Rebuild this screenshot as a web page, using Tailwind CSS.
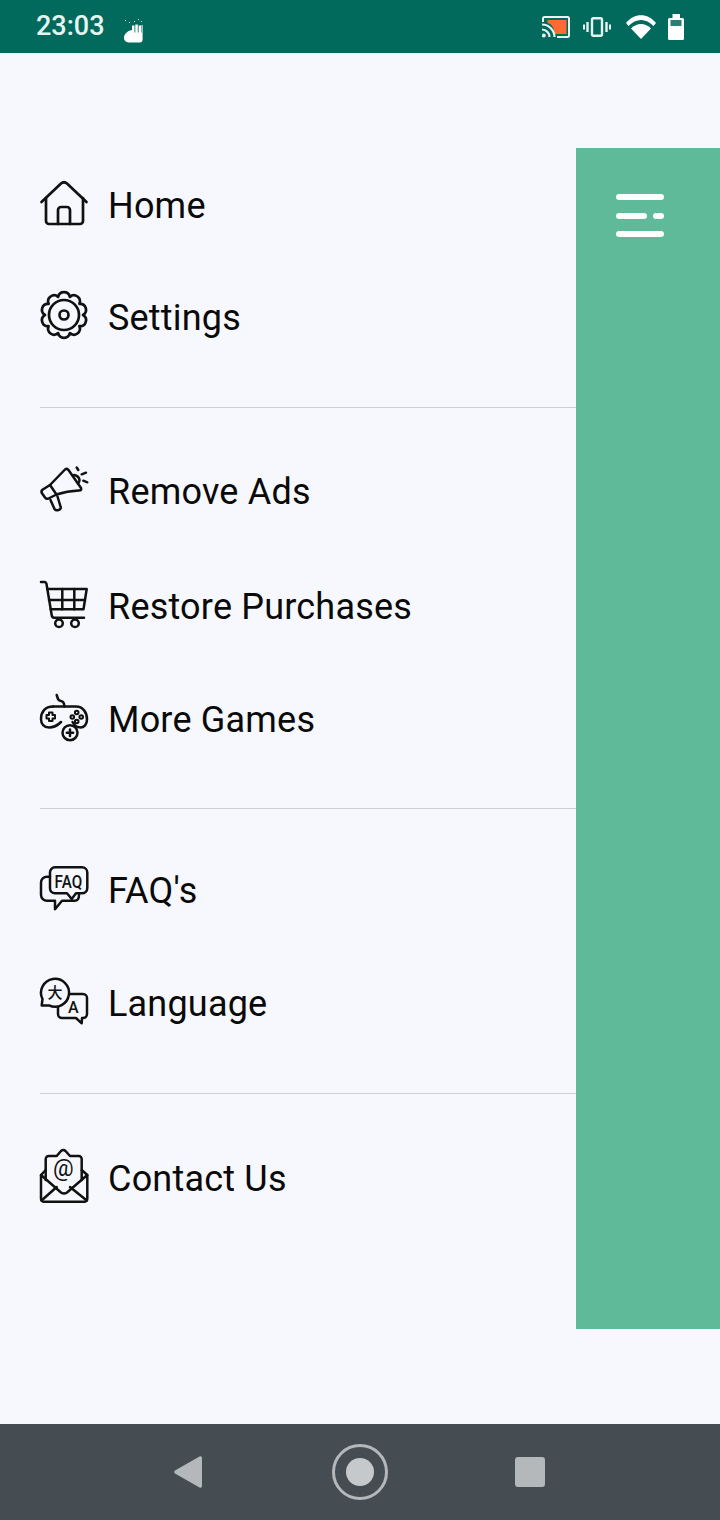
<!DOCTYPE html>
<html lang="en">
<head>
    <meta charset="UTF-8">
    <meta name="viewport" content="width=device-width, initial-scale=1.0">
    <title>Menu</title>
    <script src="https://cdn.jsdelivr.net/npm/@tailwindcss/browser@4"></script>
</head>
<body class="bg-[#f6f8fd] font-['Roboto',sans-serif]">
<div class="w-[720px] h-[1520px] flex flex-col overflow-hidden">

    <!-- status bar -->
    <div class="h-[53px] bg-[#016a5c] flex items-center justify-between pl-[36px] pr-[36px] shrink-0">
        <div class="flex items-center">
            <span class="text-[27px] font-medium text-[#e6f5f2] leading-none w-[88px]">23:03</span>
            <svg class="w-[20px] h-[24px] mt-[8px]" viewBox="0 0 20 24" fill="#fff">
                <path d="M8 6.500h2.500v7h.8v-8h2.500v8h.8v-7h2.500v7h.5V6h1v14.500a3 3 0 0 1-3 3H6c-4 0-6-2-6-4.500C0 15 3 12 8 11z"/>
                <path d="M1 1h1v1H1zM5 3h1v1H5zM14 0h1v1h-1zM17 2h1v1h-1zM10 2h1v1h-1z" opacity=".8"/>
            </svg>
        </div>
        <div class="flex items-center">
            <svg class="w-[28px] h-[22px]" viewBox="0 0 28 22" fill="none" stroke="#e6f5f2">
                <path d="M5.500 4H24.500V18H13C12 12 10 8 5.500 7z" fill="#ff6a33" stroke="none"/>
                <path d="M1 6V2.500A1.500 1.500 0 0 1 2.500 1H25.500A1.500 1.500 0 0 1 27 2.500V19.500A1.500 1.500 0 0 1 25.500 21H15" stroke-width="2"/>
                <path d="M0 8.500A12.500 12.500 0 0 1 12.500 21M0 13.500A7.500 7.500 0 0 1 7.500 21" stroke-width="2.200"/>
                <circle cx="1.800" cy="19.500" r="2" fill="#e6f5f2" stroke="none"/>
            </svg>
            <svg class="w-[28px] h-[20px] ml-[13px]" viewBox="0 0 28 20" fill="none" stroke="#e6f5f2">
                <rect x="9" y="1.200" width="10" height="17.600" rx="1.500" stroke-width="2.400"/>
                <path d="M4.500 5V15M23.500 5V15" stroke-width="2.400"/>
                <path d="M1 7.500V12.500M27 7.500V12.500" stroke-width="2"/>
            </svg>
            <svg class="w-[30px] h-[25px] ml-[15px]" viewBox="0 0 30 25" fill="#fff">
                <path d="M0 9C8-1.500 22-1.500 30 9L27.500 12C20 4 10 4 2.500 12z"/>
                <path d="M5 14.500C10.500 8.500 19.500 8.500 25 14.500L15 25z"/>
            </svg>
            <svg class="w-[16px] h-[26px] ml-[12px]" viewBox="0 0 16 26" fill="#fff">
                <path d="M4.500 0H12V4H14.500A1.500 1.500 0 0 1 16 5.500V24.500A1.500 1.500 0 0 1 14.500 26H1.500A1.500 1.500 0 0 1 0 24.500V5.500A1.500 1.500 0 0 1 1.500 4H4.500z"/>
                <rect x="2.500" y="6" width="11" height="6" fill="#016a5c" opacity=".85"/>
            </svg>
        </div>
    </div>

    <!-- drawer + green panel -->
    <div class="flex-1 flex">
        <div class="w-[576px] pl-[40px] pt-[96px]">

            <a class="h-[112px] flex items-center gap-[20px] text-[36px] tracking-[0.2px] text-[#0a0a0a]">
                <svg class="w-[48px] h-[48px] shrink-0 overflow-visible -mt-[2px]" viewBox="0 0 48 48" fill="none" stroke="#111" stroke-width="2.700" stroke-linecap="round" stroke-linejoin="round">
                    <path d="M1.500 22L21 3.500Q24 1 27 3.500L46.500 22"/>
                    <path d="M6 18V41a3 3 0 0 0 3 3H40a3 3 0 0 0 3-3V18"/>
                    <path d="M18 44V30a3 3 0 0 1 3-3h6a3 3 0 0 1 3 3V44"/>
                </svg>
                <span class="pt-[2px]">Home</span>
            </a>
            <a class="h-[112px] flex items-center gap-[20px] text-[36px] tracking-[0.2px] text-[#0a0a0a]">
                <svg class="w-[48px] h-[48px] shrink-0 overflow-visible -mt-[4px]" viewBox="0 0 48 48" fill="none" stroke="#111" stroke-width="2.700" stroke-linejoin="round">
                    <path d="M43 24A6 6 0 0 1 39.370 35.170A6 6 0 0 1 29.870 42.070A6 6 0 0 1 18.130 42.070A6 6 0 0 1 8.630 35.170A6 6 0 0 1 5 24A6 6 0 0 1 8.630 12.830A6 6 0 0 1 18.130 5.930A6 6 0 0 1 29.870 5.930A6 6 0 0 1 39.370 12.830A6 6 0 0 1 43 24z"/>
                    <circle cx="24" cy="24" r="15"/>
                    <circle cx="24" cy="24" r="4.500"/>
                </svg>
                <span class="pt-[2px]">Settings</span>
            </a>

            <div class="h-px bg-[#cdcfd2] mt-[34px]"></div>

            <a class="h-[114px] mt-[26px] flex items-center gap-[20px] text-[36px] tracking-[0.2px] text-[#0a0a0a]">
                <svg class="w-[48px] h-[48px] shrink-0 overflow-visible" viewBox="0 0 48 48" fill="none" stroke="#111" stroke-width="2.500" stroke-linecap="round" stroke-linejoin="round">
                    <path d="M10 18L25 2.500q2-1.500 3.500.5L41 21q1 2.500-2 2.500Q27 24 16.500 27.500L8.500 31.500q-2 1-3.500-1L1.800 26q-1-2 1-3.500L10 18z"/>
                    <path d="M10 18L16.500 27.500"/>
                    <path d="M10.500 33l4 9q1.500 2 4 1q3-1 2-3.500L17.500 29.500"/>
                    <path d="M34 8q5 1 5.500 5q0 2-1.500 3.500"/>
                    <path d="M36.700.5L38.300 3M41.700 7.300L46 5.700M43.300 13.700L47.300 15.300"/>
                </svg>
                <span class="pt-[2px]">Remove Ads</span>
            </a>
            <a class="h-[116px] flex items-center gap-[20px] text-[36px] tracking-[0.2px] text-[#0a0a0a]">
                <svg class="w-[48px] h-[48px] shrink-0 overflow-visible" viewBox="0 0 48 48" fill="none" stroke="#111" stroke-width="2.500" stroke-linecap="round" stroke-linejoin="round">
                    <path d="M1 0H4.500Q6 0 6.500 2L11.700 33Q12 35.700 14 35.700H44"/>
                    <path d="M7.300 7H46.700L43.500 27.300H10.700"/>
                    <path d="M9 18H45M22.300 7V27.300M34.300 7V27.300"/>
                    <circle cx="19" cy="41.300" r="3.800"/>
                    <circle cx="35" cy="41.300" r="3.800"/>
                </svg>
                <span class="pt-[2px]">Restore Purchases</span>
            </a>
            <a class="h-[110px] flex items-center gap-[20px] text-[36px] tracking-[0.2px] text-[#0a0a0a]">
                <svg class="w-[48px] h-[48px] shrink-0 overflow-visible" viewBox="0 0 48 48" fill="none" stroke="#111" stroke-width="2.500" stroke-linecap="round" stroke-linejoin="round">
                    <path d="M16.700 0L18 4Q18.500 5.500 21 6Q24.300 6.500 24.300 11.500"/>
                    <path d="M13 11.500H36C43 11.500 47 17.500 47 24.500C47 29.500 44 32.500 40.500 32.500C36.500 32.500 34.500 30.500 32.500 27"/>
                    <path d="M21 27C18 30 15 32.500 9 32.500C4 32.500 1 29 1 24C1 17 5 11.500 13 11.500"/>
                    <path d="M9 17.500H12.500V20H15V23.500H12.500V26H9V23.500H6.500V20H9z" stroke-width="2"/>
                    <circle cx="36.700" cy="17.500" r="1.800" stroke-width="2"/>
                    <circle cx="36.700" cy="26.500" r="1.800" stroke-width="2"/>
                    <circle cx="32.300" cy="22" r="1.800" stroke-width="2"/>
                    <circle cx="41.200" cy="22" r="1.800" stroke-width="2"/>
                    <circle cx="30" cy="37.700" r="7.500"/>
                    <path d="M30 34.500V41M26.800 37.700H33.200"/>
                </svg>
                <span class="pt-[2px]">More Games</span>
            </a>

            <div class="h-px bg-[#cdcfd2] mt-[34px]"></div>

            <a class="h-[112px] mt-[25px] flex items-center gap-[20px] text-[36px] tracking-[0.2px] text-[#0a0a0a]">
                <svg class="w-[48px] h-[48px] shrink-0 overflow-visible" viewBox="0 0 48 48" fill="none" stroke="#111" stroke-width="2.500" stroke-linecap="round" stroke-linejoin="round">
                    <path d="M10 10.700H7a6 6 0 0 0-6 6V29a6 6 0 0 0 6 5.800H15V43.300L22 34.800H34.700Q39 34.800 39 29"/>
                    <path d="M15 1.300H42a5.300 5.300 0 0 1 5.300 5.300V22a5.300 5.300 0 0 1-5.300 5.300H36L31.700 33L27 27.300H15a5 5 0 0 1-5-5V6.300a5 5 0 0 1 5-5z"/>
                    <text x="14.500" y="22" font-family="Roboto" font-weight="500" font-size="18" fill="#111" stroke="none" textLength="28" lengthAdjust="spacingAndGlyphs">FAQ</text>
                </svg>
                <span class="pt-[2px]">FAQ's</span>
            </a>
            <a class="h-[114px] flex items-center gap-[20px] text-[36px] tracking-[0.2px] text-[#0a0a0a]">
                <svg class="w-[48px] h-[48px] shrink-0 overflow-visible" viewBox="0 0 48 48" fill="none" stroke="#111" stroke-width="2.500" stroke-linecap="round" stroke-linejoin="round">
                    <path d="M9 26.400A14 14 0 1 0 2.500 20L1.700 26.500z"/>
                    <path d="M30 15H43a4 4 0 0 1 4 4V35a4 4 0 0 1-4 4H42L41.700 44.300L36 39H22a4 4 0 0 1-4-4V28.500"/>
                    <text x="15" y="19" text-anchor="middle" font-family="'Noto Sans CJK SC',sans-serif" font-weight="500" font-size="15" fill="#111" stroke="none">大</text>
                    <text x="33.300" y="33.700" text-anchor="middle" font-family="Roboto" font-weight="500" font-size="16" fill="#111" stroke="none">A</text>
                </svg>
                <span class="pt-[2px]">Language</span>
            </a>

            <div class="h-px bg-[#cdcfd2] mt-[33px]"></div>

            <a class="h-[112px] mt-[28px] flex items-center gap-[20px] text-[36px] tracking-[0.2px] text-[#0a0a0a]">
                <svg class="w-[48px] h-[48px] shrink-0 overflow-visible" viewBox="0 0 48 48" fill="none" stroke="#111" stroke-width="2.500" stroke-linecap="round" stroke-linejoin="round">
                    <path d="M5.700 26V5a3 3 0 0 1 3-3H16.700L21 -3Q23.300 -5 25.500 -3L30 2H38.700a3 3 0 0 1 3 3V26"/>
                    <path d="M5.700 16L1 21V44.700a3 3 0 0 0 3 3H44.300a3 3 0 0 0 3-3V21L41.700 16"/>
                    <path d="M1 21L21 38.500Q24 40.500 27 38.500L47.300 21"/>
                    <path d="M1.500 46.500L16.700 33M46.800 46.500L30 33"/>
                    <text x="23.500" y="22" text-anchor="middle" font-family="Roboto" font-size="23" fill="#111" stroke="none">@</text>
                </svg>
                <span class="pt-[2px]">Contact Us</span>
            </a>
        </div>

        <div class="w-[144px] h-[1181px] mt-[95px] bg-[#5fba9a] pt-[46px] pl-[40px] flex flex-col gap-[12.500px]">
            <div class="w-[48px] h-[6px] rounded-full bg-white"></div>
            <div class="flex gap-[6px]">
                <div class="w-[31px] h-[6px] rounded-full bg-white"></div>
                <div class="w-[11px] h-[6px] rounded-full bg-white"></div>
            </div>
            <div class="w-[48px] h-[6px] rounded-full bg-white"></div>
        </div>
    </div>

    <!-- navigation bar -->
    <div class="h-[96px] bg-[#454c52] flex items-center pl-[174px] shrink-0">
        <svg class="w-[28px] h-[32px]" viewBox="0 0 28 32" fill="#b4b8ba">
            <path d="M1 14.500L25.500.5Q28 -.5 28 2V30Q28 32.500 25.500 31.500L1 17.500Q-.5 16 1 14.500z"/>
        </svg>
        <div class="w-[56px] h-[56px] ml-[130px] rounded-full border-[3px] border-[#b4b8ba] flex items-center justify-center">
            <div class="w-[28px] h-[28px] rounded-full bg-[#c6c9cb]"></div>
        </div>
        <div class="w-[30px] h-[30px] ml-[127px] rounded-[3px] bg-[#b4b8ba]"></div>
    </div>
</div>
</body>
</html>
